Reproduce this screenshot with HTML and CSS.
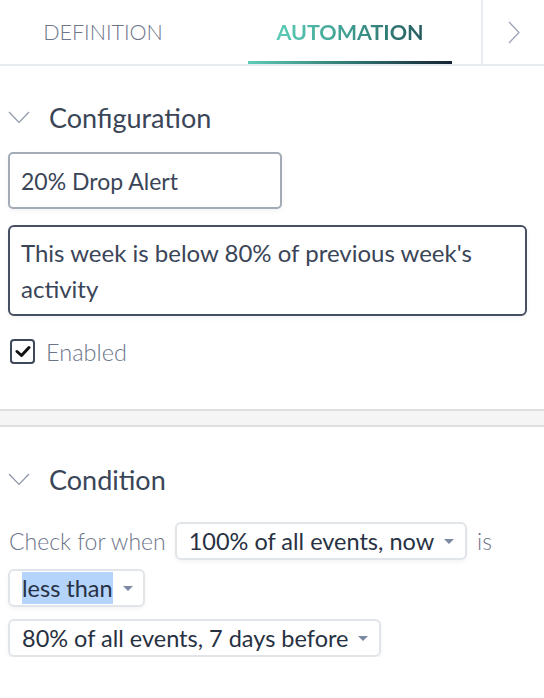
FILE: index.html
```html
<!DOCTYPE html>
<html lang="en">
<head>
<meta charset="utf-8">
<title>Automation</title>
<link rel="stylesheet" href="styles.css">
</head>
<body>
<div class="tabs">
  <div class="tab tab-def">DEFINITION</div>
  <div class="tab tab-auto"><span class="tab-auto-text">AUTOMATION</span></div>
  <div class="tab-spacer"></div>
  <div class="tab-next">
    <svg width="12" height="23" viewBox="0 0 12 23"><path d="M1 1 L11 11.5 L1 22" fill="none" stroke="#9ba4b6" stroke-width="1.3"/></svg>
  </div>
</div>

<section class="section section-config">
  <div class="sec-header">
    <svg class="sec-chevron" width="22" height="13" viewBox="0 0 22 13"><path d="M1 1 L11 11.5 L21 1" fill="none" stroke="#8e97a8" stroke-width="1.2"/></svg>
    <span class="sec-title">Configuration</span>
  </div>
  <input class="field-name" type="text" value="20% Drop Alert">
  <textarea class="field-desc" rows="2">This week is below 80% of previous week's activity</textarea>
  <div class="check-row">
    <span class="checkbox">
      <svg width="16" height="13" viewBox="0 0 16 13"><path d="M2 6.5 L6.5 10.5 L14 2.5" fill="none" stroke="#111" stroke-width="3" stroke-linecap="round" stroke-linejoin="round"/></svg>
    </span>
    <span class="check-label">Enabled</span>
  </div>
</section>

<div class="divider"></div>

<section class="section section-cond">
  <div class="sec-header">
    <svg class="sec-chevron" width="22" height="13" viewBox="0 0 22 13"><path d="M1 1 L11 11.5 L21 1" fill="none" stroke="#8e97a8" stroke-width="1.2"/></svg>
    <span class="sec-title">Condition</span>
  </div>
  <div class="cond-row cond-first">
    <span class="light-text">Check for when</span>
    <span class="select select-a"><span class="select-text">100% of all events, now</span><span class="caret"></span></span>
    <span class="light-text">is</span>
  </div>
  <div class="cond-row cond-second">
    <span class="select select-b"><span class="select-text"><span class="highlight">less than</span></span><span class="caret"></span></span>
  </div>
  <div class="cond-row cond-third">
    <span class="select select-c"><span class="select-text">80% of all events, 7 days before</span><span class="caret"></span></span>
  </div>
</section>
</body>
</html>
```
FILE: styles.css
```css
* { box-sizing: border-box; }
html, body { margin: 0; padding: 0; background: #fff; }
body {
  font-family: Lato, "Open Sans", sans-serif;
  color: #3a4557;
  width: 544px;
  overflow: hidden;
}

.tabs {
  display: flex;
  height: 66px;
  border-bottom: 2px solid #e8ebef;
}
.tab {
  display: flex;
  align-items: center;
  justify-content: center;
  height: 64px;
  font-size: 21.5px;
}
.tab-def {
  width: 206px;
  color: #6e7689;
  font-weight: 300;
}
.tab-auto {
  width: 204px;
  margin-left: 42px;
  font-weight: 700;
  border-bottom: 3px solid #2a6b6b;
  border-image: linear-gradient(90deg, #5ecdb8, #2d6f6c 55%, #162235) 1;
  padding-top: 3px;
}
.tab-auto-text {
  background: linear-gradient(90deg, #5ccdb7, #3f9c90 50%, #245a5c);
  -webkit-background-clip: text;
  background-clip: text;
  color: transparent;
}
.tab-spacer { flex: 1; }
.tab-next {
  width: 63px;
  height: 64px;
  border-left: 2px solid #e8ebef;
  display: flex;
  align-items: center;
  justify-content: center;
}

.section { padding: 0 8px; }
.section-config { padding-top: 31px; }
.section-cond { padding-top: 32px; }

.sec-header {
  display: flex;
  align-items: center;
  height: 40px;
}
.sec-chevron { margin-right: 19px; }
.sec-title {
  font-size: 27px;
  color: #3a4557;
}

.field-name {
  display: block;
  margin-top: 15px;
  width: 274px;
  height: 57px;
  padding: 0 11px;
  border: 2px solid #a3abb7;
  border-radius: 5px;
  font-family: inherit;
  font-size: 23px;
  color: #3a4557;
  box-shadow: 0 2px 5px rgba(0, 0, 0, 0.05);
  outline: none;
}
.field-desc {
  display: block;
  margin-top: 16px;
  width: 519px;
  height: 91px;
  padding: 8px 11px 7px;
  border: 2px solid #465062;
  border-radius: 6px;
  font-family: inherit;
  font-size: 24px;
  line-height: 36px;
  color: #3a4557;
  resize: none;
  overflow: hidden;
  box-shadow: 0 2px 5px rgba(0, 0, 0, 0.05);
  outline: none;
}

.check-row {
  display: flex;
  align-items: center;
  margin-top: 23px;
  height: 25px;
  padding-left: 2px;
}
.checkbox {
  width: 25px;
  height: 25px;
  border: 2px solid #3f4859;
  border-radius: 4px;
  display: flex;
  align-items: center;
  justify-content: center;
}
.check-label {
  margin-left: 11px;
  font-size: 23.5px;
  font-weight: 300;
  color: #6b7589;
}

.divider {
  margin-top: 45px;
  height: 18px;
  background: #f5f5f5;
  border-top: 2px solid #dedede;
  border-bottom: 2px solid #dedede;
}

.cond-row {
  display: flex;
  align-items: center;
}
.cond-first { margin-top: 23px; }
.cond-second { margin-top: 9px; }
.cond-third { margin-top: 12px; }

.light-text {
  font-size: 23px;
  font-weight: 300;
  color: #6b7589;
}
.cond-first .light-text:first-child { margin-left: 1px; }
.select {
  display: inline-flex;
  align-items: center;
  height: 38px;
  border: 2px solid #e1e5ea;
  border-radius: 6px;
  box-shadow: 0 2px 4px rgba(0, 0, 0, 0.05);
  padding: 0 11px 0 12px;
  font-size: 23.5px;
  color: #283142;
}
.select-a { margin-left: 9px; margin-right: 10px; }
.select-b { padding-right: 10px; }
.select-text { white-space: nowrap; }
.highlight { background: #b4d4fc; padding: 2px 0; }
.caret {
  width: 0;
  height: 0;
  margin-left: 10px;
  border-left: 5px solid transparent;
  border-right: 5px solid transparent;
  border-top: 5px solid #7d89a3;
}
```
